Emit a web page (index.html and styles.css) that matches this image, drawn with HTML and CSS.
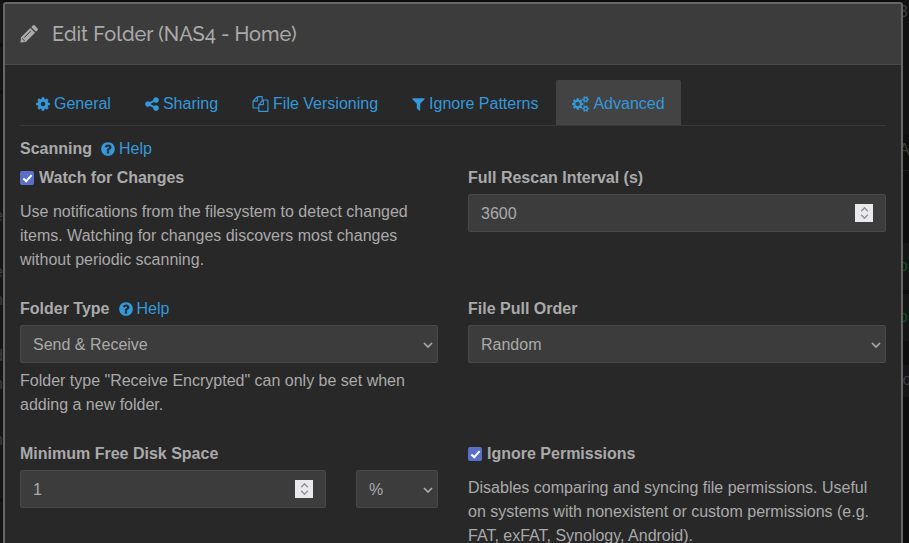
FILE: index.html
```
<!DOCTYPE html>
<html lang="en">
<head>
<meta charset="utf-8">
<title>Edit Folder (NAS4 - Home)</title>
<link rel="stylesheet" href="styles.css">
</head>
<body>
<svg class="defs" aria-hidden="true">
  <symbol id="question" viewBox="128 0 1536 1792"><path d="M1024 1376v-192q0-14-9-23t-23-9h-192q-14 0-23 9t-9 23v192q0 14 9 23t23 9h192q14 0 23-9t9-23zm256-672q0-88-55.5-163t-138.5-116-170-41q-243 0-371 213-15 24 8 42l132 100q7 6 19 6 16 0 25-12 53-68 86-92 34-24 86-24 48 0 85.5 26t37.5 59q0 38-20 61t-68 45q-63 28-115.5 86.5t-52.5 125.5v36q0 14 9 23t23 9h192q14 0 23-9t9-23q0-19 21.5-49.5t54.5-49.5q32-18 49-28.5t46-35 44.5-48 28-60.5 12.5-81zm384 192q0 209-103 385.5t-279.5 279.5-385.5 103-385.5-103-279.5-279.5-103-385.5 103-385.5 279.5-279.5 385.5-103 385.5 103 279.5 279.5 103 385.5z"/></symbol>
  <symbol id="chevron" viewBox="0 0 10 6"><path d="M1 1l4 4 4-4" fill="none" stroke="currentColor" stroke-width="1.7"/></symbol>
</svg>
<div class="backdrop" aria-hidden="true">
  <div class="side left">
    <div class="panel short"></div>
    <div class="panel short"></div>
    <div class="panel tall"><span>e</span><span></span><span>e</span><span>n</span><span></span><span>d</span><span>n</span><span></span><span>n</span></div>
    <div class="panel"></div>
  </div>
  <div class="side right">
    <div class="strip top"><span>37</span></div>
    <div class="strip name"><span>A</span></div>
    <div class="strip item"><span class="ok">o</span></div>
    <div class="strip item"><span class="ok">o</span></div>
    <div class="strip foot"><span>lo</span></div>
  </div>
</div>
<div class="modal" role="dialog" aria-labelledby="title">
  <header class="modal-header">
    <svg class="pencil" viewBox="0 0 18 18" aria-hidden="true"><path d="M.4 17.6L1 12.2 10.3 2.9 15.1 7.7 5.8 17ZM11.2 2L12.8.5Q13.8-.3 14.8.6L17.4 3.2Q18.3 4.1 17.5 5.2L16 6.8Z"/><path class="cut" d="M2 13.4L4.7 16M4.4 12.4L10.8 6"/></svg>
    <h4 id="title">Edit Folder (NAS4 - Home)</h4>
  </header>
  <div class="modal-body">
    <nav class="tabs">
      <a href="#general"><svg class="w14" viewBox="128 0 1536 1792" aria-hidden="true"><path d="M1152 896q0-106-75-181t-181-75-181 75-75 181 75 181 181 75 181-75 75-181zm512-109v222q0 12-8 23t-20 13l-185 28q-19 54-39 91 35 50 107 138 10 12 10 25t-9 23q-27 37-99 108t-94 71q-12 0-26-9l-138-108q-44 23-91 38-16 136-29 186-7 28-36 28h-222q-14 0-24.5-8.5t-11.5-21.5l-28-184q-49-16-90-37l-141 107q-10 9-25 9-14 0-25-11-126-114-165-168-7-10-7-23 0-12 8-23 15-21 51-66.5t54-70.5q-27-50-41-99l-183-27q-13-2-21-12.5t-8-23.5v-222q0-12 8-23t19-13l186-28q14-46 39-92-40-57-107-138-10-12-10-24 0-10 9-23 26-36 98.5-107.5t94.5-71.5q13 0 26 10l138 107q44-23 91-38 16-136 29-186 7-28 36-28h222q14 0 24.5 8.5t11.5 21.5l28 184q49 16 90 37l142-107q9-9 24-9 13 0 25 10 129 119 165 170 7 8 7 22 0 12-8 23-15 21-51 66.5t-54 70.5q26 50 41 98l183 28q13 2 21 12.5t8 23.5z"/></svg>General</a>
      <a href="#sharing"><svg class="w14" viewBox="128 0 1536 1792" aria-hidden="true"><path d="M1344 1024q133 0 226.5 93.5t93.5 226.5-93.5 226.5-226.5 93.5-226.5-93.5-93.5-226.5q0-12 2-34l-360-180q-92 86-218 86-133 0-226.5-93.5t-93.5-226.5 93.5-226.5 226.5-93.5q126 0 218 86l360-180q-2-22-2-34 0-133 93.5-226.5t226.5-93.5 226.5 93.5 93.5 226.5-93.5 226.5-226.5 93.5q-126 0-218-86l-360 180q2 22 2 34t-2 34l360 180q92-86 218-86z"/></svg>Sharing</a>
      <a href="#versioning"><svg class="w17" viewBox="0 0 1792 1792" aria-hidden="true"><path d="M1696 384q40 0 68 28t28 68v1216q0 40-28 68t-68 28h-960q-40 0-68-28t-28-68v-288h-544q-40 0-68-28t-28-68v-672q0-40 20-88t48-76l408-408q28-28 76-48t88-20h416q40 0 68 28t28 68v328q68-40 128-40h416zm-544 213l-299 299h299v-299zm-640-384l-299 299h299v-299zm196 647l316-316v-416h-384v416q0 40-28 68t-68 28h-416v640h512v-256q0-40 20-88t48-76zm956 804v-1152h-384v416q0 40-28 68t-68 28h-416v640h896z"/></svg>File Versioning</a>
      <a href="#patterns"><svg class="w13" viewBox="192 0 1408 1792" aria-hidden="true"><path d="M1595 295q17 41-14 70l-493 493v742q0 42-39 59-13 5-25 5-27 0-45-19l-256-256q-19-19-19-45v-486l-493-493q-31-29-14-70 17-39 59-39h1280q42 0 59 39z"/></svg>Ignore Patterns</a>
      <a href="#advanced" class="active" aria-current="page"><svg class="w17" viewBox="0 0 1920 1792" aria-hidden="true"><path d="M896 896q0-106-75-181t-181-75-181 75-75 181 75 181 181 75 181-75 75-181zm768 512q0-52-38-90t-90-38-90 38-38 90q0 53 37.5 90.5t90.5 37.5 90.5-37.5 37.5-90.5zm0-1024q0-52-38-90t-90-38-90 38-38 90q0 53 37.5 90.5t90.5 37.5 90.5-37.5 37.5-90.5zm-384 421v185q0 10-7 19.5t-16 10.5l-155 24q-11 35-32 76 34 48 90 115 7 11 7 20 0 12-7 19-23 30-82.5 89.5t-78.5 59.5q-11 0-21-7l-115-90q-37 19-77 31-11 108-23 155-7 24-30 24h-186q-11 0-20-7.5t-10-17.5l-23-153q-34-10-75-31l-118 89q-7 7-20 7-11 0-21-8-144-133-144-160 0-9 7-19 10-14 41-53t47-61q-23-44-35-82l-152-24q-10-1-17-9.5t-7-19.5v-185q0-10 7-19.5t16-10.5l155-24q11-35 32-76-34-48-90-115-7-11-7-20 0-12 7-20 22-30 82-89t79-59q11 0 21 7l115 90q34-18 77-32 11-108 23-154 7-24 30-24h186q11 0 20 7.5t10 17.5l23 153q34 10 75 31l118-89q8-7 20-7 11 0 21 8 144 133 144 160 0 8-7 19-12 16-42 54t-45 60q23 48 34 82l152 23q10 2 17 10.5t7 19.5zm640 533v140q0 16-149 31-12 27-30 52 51 113 51 138 0 4-4 7-122 71-124 71-8 0-46-47t-52-68q-20 2-30 2t-30-2q-14 21-52 68t-46 47q-2 0-124-71-4-3-4-7 0-25 51-138-18-25-30-52-149-15-149-31v-140q0-16 149-31 13-29 30-52-51-113-51-138 0-4 4-7 4-2 35-20t59-34 30-16q8 0 46 46.5t52 67.5q20-2 30-2t30 2q51-71 92-112l6-2q4 0 124 70 4 3 4 7 0 25-51 138 17 23 30 52 149 15 149 31zm0-1024v140q0 16-149 31-12 27-30 52 51 113 51 138 0 4-4 7-122 71-124 71-8 0-46-47t-52-68q-20 2-30 2t-30-2q-14 21-52 68t-46 47q-2 0-124-71-4-3-4-7 0-25 51-138-18-25-30-52-149-15-149-31v-140q0-16 149-31 13-29 30-52-51-113-51-138 0-4 4-7 4-2 35-20t59-34 30-16q8 0 46 46.5t52 67.5q20-2 30-2t30 2q51-71 92-112l6-2q4 0 124 70 4 3 4 7 0 25-51 138 17 23 30 52 149 15 149 31z"/></svg>Advanced</a>
    </nav>
    <form>
      <div class="heading"><strong>Scanning</strong><a class="help" href="#scanning-help"><svg class="w14" aria-hidden="true"><use href="#question"/></svg>Help</a></div>
      <div class="row">
        <div class="group">
          <label class="heading check"><input type="checkbox" checked>Watch for Changes</label>
          <p>Use notifications from the filesystem to detect changed items. Watching for changes discovers most changes without periodic scanning.</p>
        </div>
        <div class="group">
          <label class="heading" for="rescan">Full Rescan Interval (s)</label>
          <div class="number"><input id="rescan" type="number" value="3600"><span class="spin" aria-hidden="true"><svg class="up"><use href="#chevron"/></svg><svg><use href="#chevron"/></svg></span></div>
        </div>
      </div>
      <div class="row">
        <div class="group">
          <div class="heading"><label for="type">Folder Type</label><a class="help" href="#type-help"><svg class="w14" aria-hidden="true"><use href="#question"/></svg>Help</a></div>
          <div class="select"><select id="type"><option>Send &amp; Receive</option></select><svg aria-hidden="true"><use href="#chevron"/></svg></div>
          <p>Folder type "Receive Encrypted" can only be set when adding a new folder.</p>
        </div>
        <div class="group">
          <label class="heading" for="order">File Pull Order</label>
          <div class="select"><select id="order"><option>Random</option></select><svg aria-hidden="true"><use href="#chevron"/></svg></div>
        </div>
      </div>
      <div class="row">
        <div class="group">
          <label class="heading" for="space">Minimum Free Disk Space</label>
          <div class="amount">
            <div class="number"><input id="space" type="number" value="1"><span class="spin" aria-hidden="true"><svg class="up"><use href="#chevron"/></svg><svg><use href="#chevron"/></svg></span></div>
            <div class="select"><select aria-label="Unit"><option>%</option></select><svg aria-hidden="true"><use href="#chevron"/></svg></div>
          </div>
        </div>
        <div class="group">
          <label class="heading check"><input type="checkbox" checked>Ignore Permissions</label>
          <p>Disables comparing and syncing file permissions. Useful on systems with nonexistent or custom permissions (e.g. FAT, exFAT, Synology, Android).</p>
        </div>
      </div>
    </form>
  </div>
</div>
</body>
</html>
```

FILE: styles.css
```
* { box-sizing: border-box; }
body {
  margin: 0;
  height: 100vh;
  overflow: hidden;
  background: #0d0d0d;
  color: #aaa;
  font: 16px/24px "Liberation Sans", Arial, sans-serif;
}
svg { fill: currentColor; flex: none; }
a { color: #3498db; text-decoration: none; }
.defs { display: none; }

/* Dimmed page behind the dialog */
.backdrop {
  position: absolute;
  inset: 0;
  z-index: -1;
  display: flex;
  justify-content: space-between;
  overflow: hidden;
  color: #3c3c3c;
}
.side {
  display: flex;
  flex-direction: column;
  gap: 4px;
  width: 10px;
}
.left { direction: rtl; width: 3px; }
.panel { background: #151515; }
.panel:last-child { flex: 1; }
.short { height: 43px; }
.tall {
  display: flex;
  flex-direction: column;
  height: 404px;
  padding-top: 108px;
  line-height: 28px;
}
.tall span { height: 28px; }
.strip span { display: block; }
.strip { background: #151515; }
.strip.top { height: 134px; background: #111; }
.strip.name { height: 33px; border-bottom: 1px solid #1c1c1c; background: none; }
.strip.item { height: 47px; padding-top: 11px; }
.strip.name + .item { margin-top: 68px; }
.strip.foot { height: 32px; margin-top: 20px; padding-top: 3px; }
.ok { color: #0e4f20; }

.modal {
  margin: 2px 6px 0 3px;
  min-height: 100vh;
  border: 2px solid #666;
  border-radius: 3px;
  background: #282828;
}
.modal-header {
  display: flex;
  align-items: center;
  gap: 14px;
  padding: 15px;
  background: #3c3c3c;
  border-bottom: 1px solid #484848;
}
.modal-header h4 {
  margin: 0;
  font: 500 20px/30px Raleway, Lato, sans-serif;
}
.pencil { width: 18px; height: 18px; }
.pencil .cut { fill: none; stroke: #3c3c3c; stroke-width: 1; }
.modal-body { padding: 15px; }
.tabs {
  display: flex;
  gap: 2px;
  margin-bottom: 10px;
  border-bottom: 1px solid #383838;
}
.tabs a {
  display: flex;
  align-items: center;
  gap: 4px;
  padding: 12px 16px 9px;
  border-radius: 2px 2px 0 0;
}
.tabs .active { background: #434343; }
.w13, .w14, .w17 { height: 16px; }
.w13 { width: 13px; }
.w14 { width: 14px; }
.w17 { width: 17px; }
.heading {
  display: flex;
  align-items: center;
  margin-bottom: 4px;
  padding-top: 1px;
  font-weight: 700;
}
.help {
  display: flex;
  align-items: center;
  gap: 4px;
  margin-left: 9px;
  font-weight: 400;
}
.check { gap: 5px; }
.check input {
  width: 14px;
  height: 14px;
  margin: 0;
  appearance: none;
  border-radius: 2px;
  background: #5a70c8;
  display: grid;
  place-items: center;
}
.check input::before {
  content: "";
  width: 3px;
  height: 7px;
  margin-bottom: 2px;
  border: solid #fff;
  border-width: 0 2px 2px 0;
  transform: rotate(42deg);
}
.row {
  display: grid;
  grid-template-columns: 1fr 1fr;
  gap: 30px;
  margin-bottom: 24px;
}
p { margin: 6px 0 0; }
.check + p { margin-top: 10px; }
.number, .select { display: grid; align-items: center; }
.number > *, .select > * { grid-area: 1 / 1; }
input[type="number"], select {
  width: 100%;
  min-width: 0;
  height: 38px;
  margin: 0;
  padding: 2px 12px 0;
  border: 1px solid #484848;
  border-radius: 2px;
  background: #3c3c3c;
  color: #aaa;
  font: inherit;
  appearance: none;
}
input::-webkit-inner-spin-button { appearance: none; }
.spin {
  justify-self: end;
  display: flex;
  flex-direction: column;
  align-items: center;
  justify-content: space-between;
  width: 18px;
  height: 18px;
  margin-right: 13px;
  padding: 3px 0;
  background: #e9e9ed;
  color: #8f8f9d;
  pointer-events: none;
}
.spin svg { width: 9px; height: 5px; }
.spin .up { transform: rotate(180deg); }
.select > svg {
  justify-self: end;
  width: 10px;
  height: 6px;
  margin: 2px 5px 0 0;
  pointer-events: none;
}
.amount { display: grid; grid-template-columns: 306fr 82fr; gap: 30px; }
```
